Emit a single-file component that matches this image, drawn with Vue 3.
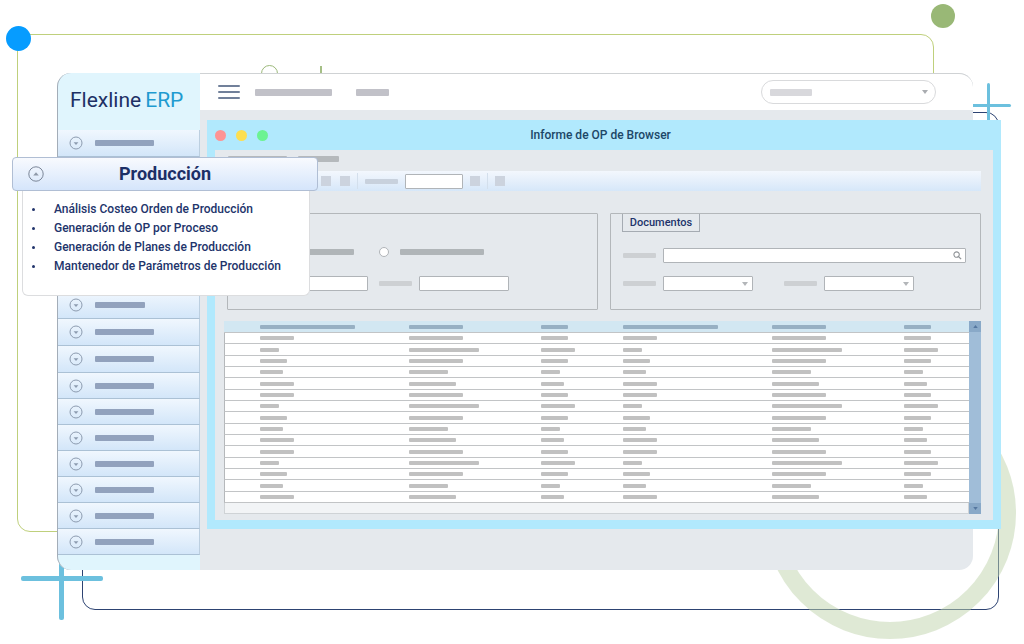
<script setup>
const navItems = Array.from({ length: 16 }, (_, i) => ({ id: i + 1, short: i === 6 }))

const reports = [
  'Análisis Costeo Orden de Producción',
  'Generación de OP por Proceso',
  'Generación de Planes de Producción',
  'Mantenedor de Parámetros de Producción',
]

const headWidths = [95, 54, 27, 95, 54, 27]
const pattern = [
  [34, 54, 27, 34, 54, 27],
  [19, 70, 34, 19, 70, 34],
  [27, 54, 27, 27, 54, 27],
  [23, 39, 19, 23, 39, 19],
  [34, 47, 23, 34, 47, 23],
]
const rows = Array.from({ length: 15 }, (_, i) => pattern[i % pattern.length])
</script>

<template>
  <div class="stage">
    <div class="decor" aria-hidden="true">
      <span class="frame frame-green"></span>
      <span class="frame frame-navy"></span>
      <span class="ring"></span>
      <span class="mini-ring"></span>
      <span class="tick"></span>
      <span class="dot dot-blue"></span>
      <span class="dot dot-green"></span>
      <span class="cross cross-top"></span>
      <span class="cross cross-bottom"></span>
    </div>

    <div class="shell">
      <aside class="sidebar">
        <div class="logo"><span>Flexline</span><span class="erp">ERP</span></div>
        <nav class="nav" aria-label="Módulos">
          <button v-for="n in navItems" :key="n.id" type="button" class="nav-item" :aria-label="'Módulo ' + n.id">
            <svg class="nav-icon" viewBox="0 0 14 14">
              <circle cx="7" cy="7" r="6" fill="none" stroke="#8d9cb0" />
              <path d="M4.6 6.2h4.8L7 9z" fill="#8d9cb0" />
            </svg>
            <span class="bar nav-bar" :class="{ short: n.short }"></span>
          </button>
        </nav>
      </aside>

      <div class="main">
        <header class="topbar">
          <button type="button" class="burger" aria-label="Menú"><i></i><i></i><i></i></button>
          <span class="bar top-bar wide"></span>
          <span class="bar top-bar"></span>
          <button type="button" class="pill" aria-label="Usuario">
            <span class="bar pill-bar"></span>
            <svg class="caret" viewBox="0 0 6 4"><path d="M0 0h6L3 4z" fill="#a9acb0" /></svg>
          </button>
        </header>

        <section class="window">
          <div class="titlebar">
            <span class="light red"></span><span class="light yellow"></span><span class="light green"></span>
            <h1>Informe de OP de Browser</h1>
          </div>
          <div class="content">
            <div class="menu-row"><span class="bar menu-a"></span><span class="bar menu-b"></span></div>
            <div class="toolbar">
              <i class="sq"></i><i class="sq"></i><i class="sep"></i>
              <span class="bar label-bar cool"></span>
              <input class="box tool-input" type="text" aria-label="Buscar" />
              <i class="sq"></i><i class="sep"></i><i class="sq"></i>
            </div>

            <div class="panels">
              <div class="panel filters">
                <div class="row radios">
                  <span class="bar strong first"></span>
                  <input type="radio" class="radio" aria-label="Opción" />
                  <span class="bar strong"></span>
                </div>
                <div class="row fields">
                  <input class="box field" type="text" aria-label="Desde" />
                  <span class="bar label-bar"></span>
                  <input class="box field" type="text" aria-label="Hasta" />
                </div>
              </div>
              <div class="panel docs">
                <h2 class="tab">Documentos</h2>
                <div class="row search-row">
                  <span class="bar label-bar"></span>
                  <div class="search">
                    <input class="box" type="text" aria-label="Buscar documentos" />
                    <svg viewBox="0 0 10 10"><circle cx="4" cy="4" r="3" fill="none" stroke="#8f9397" stroke-width="1.2" /><path d="M6.2 6.2L9 9" stroke="#8f9397" stroke-width="1.4" /></svg>
                  </div>
                </div>
                <div class="row select-row">
                  <span class="bar label-bar"></span>
                  <div class="select"><select class="box" aria-label="Tipo"></select><svg class="caret" viewBox="0 0 6 4"><path d="M0 0h6L3 4z" fill="#b3b6b9" /></svg></div>
                  <span class="bar label-bar second"></span>
                  <div class="select"><select class="box" aria-label="Estado"></select><svg class="caret" viewBox="0 0 6 4"><path d="M0 0h6L3 4z" fill="#b3b6b9" /></svg></div>
                </div>
              </div>
            </div>

            <div class="grid">
              <div class="sheet">
                <table>
                  <colgroup><col class="c1" /><col class="c2" /><col class="c3" /><col class="c4" /><col class="c2" /><col /></colgroup>
                  <thead>
                    <tr><th v-for="(w, i) in headWidths" :key="i"><span class="cell-bar" :style="{ width: w + 'px' }"></span></th></tr>
                  </thead>
                  <tbody>
                    <tr v-for="(r, k) in rows" :key="k">
                      <td v-for="(w, i) in r" :key="i"><span class="cell-bar" :style="{ width: w + 'px' }"></span></td>
                    </tr>
                  </tbody>
                </table>
                <div class="sheet-foot"></div>
              </div>
              <div class="scroll">
                <button type="button" aria-label="Subir"><svg viewBox="0 0 6 4"><path d="M0 4h6L3 0z" fill="#55779f" /></svg></button>
                <button type="button" aria-label="Bajar"><svg viewBox="0 0 6 4"><path d="M0 0h6L3 4z" fill="#55779f" /></svg></button>
              </div>
            </div>
          </div>
        </section>
      </div>
    </div>

    <section class="popup">
      <button type="button" class="popup-head">
        <svg viewBox="0 0 16 16"><circle cx="8" cy="8" r="7.2" fill="none" stroke="#7b8698" /><path d="M5.2 9.4h5.6L8 6.2z" fill="#8f99a9" /></svg>
        <span>Producción</span>
      </button>
      <ul>
        <li v-for="r in reports" :key="r">{{ r }}</li>
      </ul>
    </section>
  </div>
</template>

<style>
body { margin: 0; background: #fff; }
</style>

<style scoped>
* { box-sizing: border-box; }
button, input, select { font: inherit; margin: 0; padding: 0; border: 0; background: none; appearance: none; border-radius: 0; }
h1, h2, ul { margin: 0; padding: 0; }
.stage {
  position: relative;
  overflow: hidden;
  padding: 73px 51px 74px 57px;
  font-family: Roboto, "Liberation Sans", sans-serif;
  color: #22346b;
}
.bar { display: block; height: 6px; border-radius: 1px; flex: none; }

.decor span { position: absolute; }
.frame { border-radius: 13px; }
.frame-green { left: 17px; right: 90px; top: 34px; bottom: 112px; border: 1px solid #bfd07c; }
.frame-navy { left: 82px; right: 25px; top: 112px; bottom: 34px; border: 1px solid #2d4372; }
.ring { right: 8px; bottom: 5px; width: 252px; height: 252px; border: 17px solid rgba(191, 211, 171, 0.5); border-radius: 50%; }
.mini-ring { left: 261px; top: 65px; width: 17px; height: 17px; border: 1px solid #9cb97a; border-radius: 50%; }
.tick { left: 320px; top: 66px; width: 2px; height: 10px; background: #a5bf86; }
.dot { border-radius: 50%; }
.dot-blue { left: 6px; top: 26px; width: 25px; height: 25px; background: #069cff; }
.dot-green { right: 69px; top: 4px; width: 24px; height: 24px; background: #99b876; }
.cross::before, .cross::after { content: ""; position: absolute; background: #6cc0de; border-radius: 2px; }
.cross-top { right: 13px; top: 83px; width: 45px; height: 45px; }
.cross-top::before { left: 0; right: 0; top: 21px; height: 3px; }
.cross-top::after { top: 0; bottom: 0; left: 21px; width: 3px; }
.cross-bottom { left: 21px; bottom: 24px; width: 82px; height: 82px; }
.cross-bottom::before { left: 0; right: 0; top: 38px; height: 5px; }
.cross-bottom::after { top: 0; bottom: 0; left: 38px; width: 5px; }

.shell {
  position: relative;
  display: flex;
  min-height: 497px;
  border-radius: 14px;
  background: #e5e9ed;
}
.sidebar {
  flex: none;
  width: 143px;
  background: #e0f5fd;
  border-left: 1px solid #a3adb8;
  border-radius: 14px 0 0 14px;
}
.logo {
  display: flex;
  align-items: center;
  gap: 4px;
  height: 57px;
  padding: 0 0 4px 12px;
  font-size: 21px;
  line-height: 26px;
  color: #1d3065;
}
.erp { color: #1f9bd0; }
.nav-item {
  display: flex;
  align-items: center;
  gap: 12px;
  width: 100%;
  height: 26px;
  padding-left: 11px;
  border-right: 1px solid #bccfe0;
  border-bottom: 1px solid #abc1d5;
  background: linear-gradient(#f0f7fe, #d3e6f9);
}
.nav-item:nth-child(-n + 9) { height: 27px; }
.nav-icon { width: 14px; height: 14px; flex: none; }
.nav-bar { width: 59px; background: #92a2bd; }
.nav-bar.short { width: 50px; }

.main { flex: 1; min-width: 0; }
.topbar {
  display: flex;
  align-items: center;
  height: 37px;
  padding: 0 37px 0 18px;
  border-top: 1px solid #cfd2d4;
  border-radius: 0 14px 0 0;
  background: #fff;
}
.burger { display: flex; flex-direction: column; gap: 4px; width: 22px; margin-right: 15px; }
.burger i { height: 2px; border-radius: 1px; background: #71809a; }
.top-bar { width: 33px; height: 7px; background: #c1c1c8; }
.top-bar.wide { width: 77px; margin-right: 24px; }
.pill {
  display: flex;
  align-items: center;
  justify-content: space-between;
  width: 175px;
  height: 24px;
  margin-left: auto;
  padding: 0 7px 0 8px;
  border: 1px solid #d9dadc;
  border-radius: 12px;
}
.pill-bar { width: 42px; height: 7px; background: #d8d8dc; }
.caret { width: 6px; height: 4px; }

.window {
  margin: 10px -28px 0 7px;
  padding: 0 8px 9px;
  background: #b1e9fd;
}
.titlebar { display: flex; align-items: center; gap: 10px; height: 30px; }
.light { width: 11px; height: 11px; border-radius: 50%; }
.red { background: #fd9494; }
.yellow { background: #fddf50; }
.green { background: #6cf392; }
h1 {
  flex: 1;
  padding-right: 70px;
  text-align: center;
  font-size: 12px;
  line-height: 16px;
  font-weight: 500;
  color: #1c4768;
}
.content { padding: 6px 12px 6px 9px; background: #e5e9ed; }
.menu-row { display: flex; gap: 11px; padding-left: 4px; }
.menu-a { width: 59px; background: #b5b9bc; }
.menu-b { width: 41px; background: #b5b9bc; }
.toolbar {
  display: flex;
  align-items: center;
  height: 20px;
  margin-top: 9px;
  padding-left: 97px;
  gap: 7px;
  background: linear-gradient(#f3f7fd, #d6e7f9);
}
.sq { width: 10px; height: 10px; background: #ccd3de; }
.sq + .sq { margin-left: 2px; }
.sep { width: 1px; height: 16px; background: #d3dfec; }
.label-bar { width: 33px; height: 5px; background: #cdd0d3; }
.cool { background: #c8d1dd; }
.box { display: block; border: 1px solid #b0b4b8; border-radius: 1px; background: #fff; }
.tool-input { width: 58px; height: 15px; }
.panels { display: grid; grid-template-columns: 1fr 1fr; gap: 12px; margin: 22px 0 0 3px; }
.panel { height: 97px; border: 1px solid #b3b7ba; border-radius: 1px; }
.row { display: flex; align-items: center; }
.filters { padding: 33px 0 0 50px; }
.strong { width: 84px; background: #b0b5b8; }
.strong.first { width: 76px; }
.radio { width: 10px; height: 10px; margin: 0 11px 0 25px; border: 1px solid #b0b4b8; border-radius: 50%; background: #fff; }
.fields { gap: 7px; margin-top: 19px; }
.field { width: 90px; height: 15px; }
.fields .label-bar { margin-left: 4px; }
.docs { padding: 0 14px 0 12px; }
.tab {
  width: 78px;
  height: 18px;
  margin-left: -1px;
  border: 1px solid #a5abb2;
  border-top: 0;
  text-align: center;
  font-size: 11px;
  line-height: 17px;
  font-weight: 500;
}
.search-row { gap: 7px; margin-top: 16px; }
.search { position: relative; flex: 1; }
.search .box { width: 100%; height: 15px; }
.search svg { position: absolute; right: 4px; top: 3px; width: 9px; height: 9px; }
.select-row { gap: 7px; margin-top: 13px; }
.select { position: relative; }
.select .box { width: 90px; height: 15px; }
.select .caret { position: absolute; right: 5px; top: 6px; }
.second { margin-left: 24px; }

.grid { display: flex; margin-top: 11px; }
.sheet { flex: 1; min-width: 0; }
table { width: 100%; table-layout: fixed; border-collapse: separate; border-spacing: 0; }
.c1 { width: 185px; }
.c2 { width: 132px; }
.c3 { width: 82px; }
.c4 { width: 149px; }
th, td { height: 11px; padding: 0; border-bottom: 1px solid #c2c4c6; line-height: 0; vertical-align: middle; }
th { height: 12px; background: #d2e7f2; }
td { background: #fff; }
tbody tr:nth-child(3n + 2) td { height: 12px; }
th:first-child, td:first-child { padding-left: 36px; }
td:first-child { border-left: 1px solid #b5b8bb; padding-left: 35px; }
.cell-bar { display: block; height: 4px; border-radius: 1px; background: #c1c1c1; }
th .cell-bar { background: #97b0c3; }
.sheet-foot { height: 11px; border: 1px solid #cfd3d6; border-top: 0; background: #f2f4f6; }
.scroll { display: flex; flex-direction: column; justify-content: space-between; width: 12px; background: #a0bdd8; }
.scroll button { display: grid; place-items: center; height: 11px; background: #89a9c8; }
.scroll svg { width: 5px; height: 3px; }

.popup { position: absolute; left: 12px; top: 157px; width: 306px; }
.popup-head {
  position: relative;
  display: flex;
  align-items: center;
  width: 100%;
  height: 34px;
  padding: 0 15px;
  border: 1px solid #b0bed4;
  border-radius: 4px;
  background: linear-gradient(#f8fafe, #d5e5fb);
  color: #1c2f66;
}
.popup-head svg { width: 16px; height: 16px; }
.popup-head span { flex: 1; padding-right: 16px; font-size: 18px; line-height: 22px; font-weight: 700; }
ul {
  list-style: none;
  margin: 0 8px 0 10px;
  padding: 9px 0 19px;
  border: 1px solid #dcdddf;
  border-top: 0;
  border-radius: 0 0 6px 6px;
  background: #fff;
}
li { display: flex; align-items: center; gap: 19px; padding-left: 9px; font-size: 12px; line-height: 19px; font-weight: 500; }
li::before { content: ""; width: 3px; height: 3px; border-radius: 50%; background: #22346b; }
</style>
